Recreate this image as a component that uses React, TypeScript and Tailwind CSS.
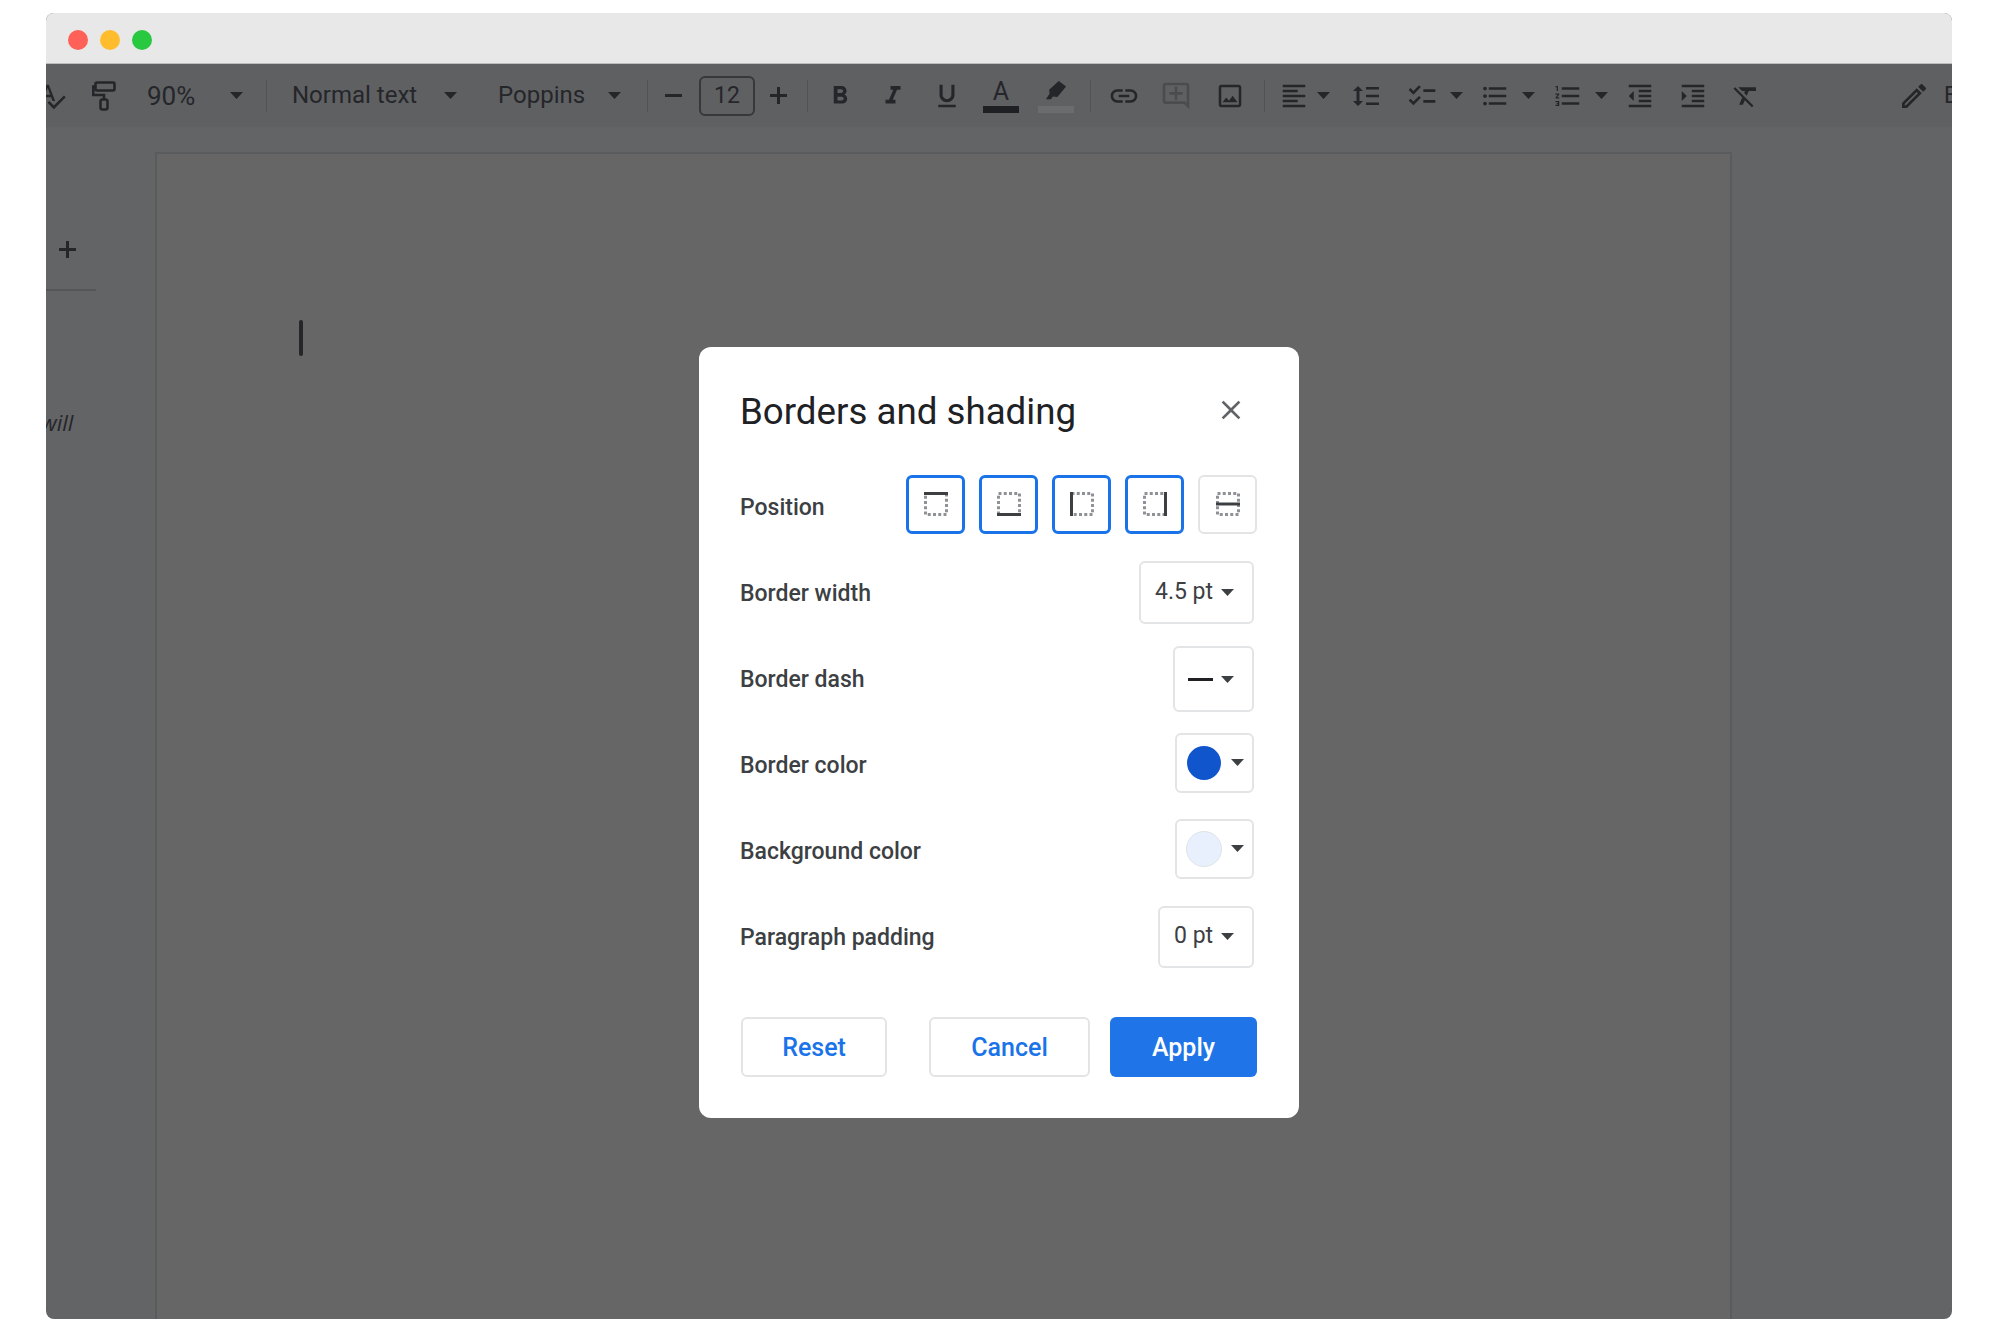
import {
  MdSpellcheck,
  MdFormatBold,
  MdFormatItalic,
  MdFormatUnderlined,
  MdLink,
  MdOutlineAddComment,
  MdOutlineImage,
  MdFormatAlignLeft,
  MdChecklist,
  MdFormatListBulleted,
  MdFormatListNumbered,
  MdFormatIndentDecrease,
  MdFormatIndentIncrease,
  MdFormatClear,
  MdOutlineEdit,
  MdClose,
} from 'react-icons/md'

const Caret = ({ className = '' }: { className?: string }) => (
  <svg viewBox="0 0 13 7" className={`w-[13px] h-[7px] shrink-0 fill-current ${className}`}>
    <path d="M0 0h13L6.5 7z" />
  </svg>
)

const Sep = ({ className = '' }: { className?: string }) => (
  <div className={`w-px h-8 bg-[#525356] shrink-0 ${className}`} />
)

// top / bottom / left / right / middle border glyphs of the Position row
function BorderGlyph({ side }: { side: 'top' | 'bottom' | 'left' | 'right' | 'middle' }) {
  return (
    <svg viewBox="0 0 24 24" className="w-6 h-6" fill="none">
      <rect x="1.5" y="1.5" width="21" height="21" stroke="#8e9196" strokeWidth="3" strokeDasharray="3 2.25" />
      {side === 'top' && <path d="M0 1.5h24" stroke="#3c4043" strokeWidth="3" />}
      {side === 'bottom' && <path d="M0 22.5h24" stroke="#3c4043" strokeWidth="3" />}
      {side === 'left' && <path d="M1.5 0v24" stroke="#3c4043" strokeWidth="3" />}
      {side === 'right' && <path d="M22.5 0v24" stroke="#3c4043" strokeWidth="3" />}
      {side === 'middle' && <path d="M0 12h24" stroke="#3c4043" strokeWidth="3" />}
    </svg>
  )
}

const positions = ['top', 'bottom', 'left', 'right'] as const

const rowCls = 'h-[86px] flex items-center justify-between'
const labelCls = 'text-[23px] font-medium text-[#3c4043] leading-none -ml-px'
const selectCls = 'flex items-center border-2 border-[#e3e4e6] rounded-md shrink-0'

export default function App() {
  return (
    <div className="w-full h-[1332px] bg-white pl-[46px] pt-[13px] font-['Roboto',sans-serif]">
      <div className="relative w-[1906px] h-[1306px] rounded-lg overflow-hidden flex flex-col bg-[#636466]">
        {/* Title bar */}
        <div className="h-[51px] shrink-0 bg-[#e8e8e8] border-b border-[#bdbdbd] flex items-center gap-3 pl-[22px] pt-[3px]">
          <div className="w-5 h-5 rounded-full bg-[#ff6058]" />
          <div className="w-5 h-5 rounded-full bg-[#ffbd2e]" />
          <div className="w-5 h-5 rounded-full bg-[#28c840]" />
        </div>

        {/* Docs toolbar */}
        <div className="h-[63px] shrink-0 bg-[#5f6062] flex items-center text-[#25262a] whitespace-nowrap">
          <MdSpellcheck size={30} className="shrink-0 -ml-[9px]" />
          <svg viewBox="0 0 24 30" className="w-6 h-[30px] shrink-0 ml-[25px]" fill="none" stroke="currentColor" strokeWidth="2.6">
            <rect x="3.5" y="1.5" width="19" height="8" rx="1.5" />
            <path d="M3.5 5.5H1.3v8.5H12v4.5" />
            <rect x="8.5" y="18.5" width="7" height="10" rx="2" />
          </svg>
          <span className="w-12 ml-[31px] text-[26px] leading-none shrink-0 pt-px">90%</span>
          <Caret className="ml-[35px]" />
          <Sep className="ml-[23px]" />
          <span className="w-[125px] ml-[25px] text-[24px] leading-none shrink-0 -mt-px">Normal text</span>
          <Caret className="ml-[27px]" />
          <span className="w-[84px] ml-[41px] text-[24px] leading-none shrink-0 -mt-px">Poppins</span>
          <Caret className="ml-[26px]" />
          <Sep className="ml-[26px]" />
          <div className="w-[17px] h-[3px] ml-[17px] bg-[#25262a] shrink-0" />
          <div className="w-14 h-10 ml-[17px] pt-[2px] border-2 border-[#37383b] rounded-md flex items-center justify-center text-[23px] shrink-0">12</div>
          <svg viewBox="0 0 17 17" className="w-[17px] h-[17px] ml-[15px] shrink-0 fill-current">
            <path d="M7 0h3v7h7v3h-7v7H7v-7H0V7h7z" />
          </svg>
          <Sep className="ml-5" />
          <MdFormatBold size={30} className="shrink-0 ml-[17px]" />
          <MdFormatItalic size={30} className="shrink-0 ml-[23px]" />
          <MdFormatUnderlined size={30} className="shrink-0 ml-6" />
          <div className="w-9 ml-[21px] flex flex-col items-center shrink-0 h-[33px] mt-[2px]">
            <span className="text-[25px] leading-[24px] h-[26px]">A</span>
            <div className="w-full h-[7px] bg-[#1f2023]" />
          </div>
          <div className="w-9 ml-[19px] flex flex-col items-center shrink-0 h-[33px] mt-[2px]">
            <svg viewBox="0 0 24 24" className="w-6 h-[22px] fill-current mb-1">
              <path d="M15 1l8 6-9.5 11.5-5-.5-2 3H1l4-6-.5-4.5z" />
            </svg>
            <div className="w-full h-[7px] bg-[#6b6c6e]" />
          </div>
          <Sep className="ml-4" />
          <MdLink size={32} className="shrink-0 ml-[17px]" />
          <MdOutlineAddComment size={32} className="shrink-0 ml-5 text-[#4b4c4f]" />
          <MdOutlineImage size={30} className="shrink-0 ml-[23px]" />
          <Sep className="ml-[19px]" />
          <MdFormatAlignLeft size={30} className="shrink-0 ml-[14px]" />
          <Caret className="ml-2" />
          <svg viewBox="0 0 26 20" className="w-[26px] h-5 shrink-0 ml-[23px] fill-current">
            <path d="M5 0l5 5H6.5v10H10l-5 5-5-5h3.5V5H0z" />
            <path d="M13 1h13v2.6H13zM13 8.7h13v2.6H13zM13 16.4h13V19H13z" />
          </svg>
          <MdChecklist size={32} className="shrink-0 ml-[27px]" />
          <Caret className="ml-3" />
          <MdFormatListBulleted size={30} className="shrink-0 ml-[17px]" />
          <Caret className="ml-3" />
          <MdFormatListNumbered size={30} className="shrink-0 ml-[18px]" />
          <Caret className="ml-3" />
          <MdFormatIndentDecrease size={30} className="shrink-0 ml-[17px]" />
          <MdFormatIndentIncrease size={30} className="shrink-0 ml-[23px]" />
          <MdFormatClear size={30} className="shrink-0 ml-[23px]" />
          <MdOutlineEdit size={32} className="shrink-0 ml-[137px]" />
          <span className="ml-[14px] text-[23px] leading-none shrink-0">E</span>
        </div>

        {/* Document area */}
        <div className="flex-1 flex min-h-0">
          <div className="w-[109px] shrink-0 flex flex-col text-[#25262a]">
            <svg viewBox="0 0 17 17" className="w-[17px] h-[17px] mt-[114px] ml-[13px] fill-current">
              <path d="M7 0h3v7h7v3h-7v7H7v-7H0V7h7z" />
            </svg>
            <div className="w-[50px] h-[2px] mt-[31px] bg-[#55565a]" />
            <span className="mt-[120px] -ml-[5px] italic text-[22px] leading-none font-['Open_Sans',sans-serif]">will</span>
          </div>
          <div className="w-[1577px] mt-[25px] bg-[#666666] border-l-2 border-t-2 border-r-2 border-[#5a5b5d] shrink-0">
            <div className="w-1 h-9 mt-[166px] ml-[142px] rounded-sm bg-[#25262a]" />
          </div>
        </div>

        {/* Borders and shading dialog */}
        <div className="absolute left-[653px] top-[334px] w-[600px] h-[771px] bg-white rounded-xl pl-[42px] pr-[42px] pt-[38px] flex flex-col">
          <div className="h-14 flex items-center justify-between shrink-0">
            <h2 className="text-[36.7px] leading-none text-[#202124] -ml-px mb-[2px]">Borders and shading</h2>
            <MdClose size={32} className="text-[#5f6368] mr-[10px] mb-[6px]" />
          </div>

          <div className="mt-[34px] h-[58px] flex items-center justify-between">
            <span className={`${labelCls} pt-[6px]`}>Position</span>
            <div className="flex gap-[14px]">
              {positions.map((p) => (
                <div key={p} className="w-[59px] h-[59px] border-[3px] border-[#1a73e8] rounded-md flex items-center justify-center">
                  <BorderGlyph side={p} />
                </div>
              ))}
              <div className="w-[59px] h-[59px] border-2 border-[#e3e4e6] rounded-md flex items-center justify-center">
                <BorderGlyph side="middle" />
              </div>
            </div>
          </div>

          <div className="mt-[17px] flex flex-col">
            <div className={rowCls}>
              <span className={labelCls}>Border width</span>
              <div className={`${selectCls} w-[115px] h-[63px] mr-[3px] mb-[2px] pl-[14px] text-[23px] text-[#3c4043]`}>
                <span className="w-[66px]">4.5 pt</span>
                <Caret className="text-[#3c4043] w-3 h-[6px]" />
              </div>
            </div>
            <div className={rowCls}>
              <span className={labelCls}>Border dash</span>
              <div className={`${selectCls} w-[81px] h-[66px] mr-[3px] pl-[13px]`}>
                <div className="w-[25px] h-[3px] bg-[#202124]" />
                <Caret className="text-[#3c4043] ml-2 w-3 h-[6px]" />
              </div>
            </div>
            <div className={rowCls}>
              <span className={labelCls}>Border color</span>
              <div className={`${selectCls} w-[79px] h-[60px] mr-[3px] mb-[5px] pl-[10px]`}>
                <div className="w-[34px] h-[34px] rounded-full bg-[#1155cc]" />
                <Caret className="text-[#3c4043] ml-[10px] w-3 h-[6px]" />
              </div>
            </div>
            <div className={rowCls}>
              <span className={labelCls}>Background color</span>
              <div className={`${selectCls} w-[79px] h-[60px] mr-[3px] mb-[5px] pl-[9px]`}>
                <div className="w-9 h-9 rounded-full bg-[#e8f0fe] border border-[#dfe3e8]" />
                <Caret className="text-[#3c4043] ml-[9px] w-3 h-[6px]" />
              </div>
            </div>
            <div className={rowCls}>
              <span className={labelCls}>Paragraph padding</span>
              <div className={`${selectCls} w-[96px] h-[62px] mr-[3px] mb-[1px] pl-[14px] text-[23px] text-[#3c4043]`}>
                <span className="w-[47px]">0 pt</span>
                <Caret className="text-[#3c4043] w-3 h-[6px]" />
              </div>
            </div>
          </div>

          <div className="mt-[37px] flex text-[25px] font-medium">
            <button className="w-[146px] h-[60px] pt-px border-2 border-[#e3e4e6] rounded-md text-[#1a73e8]">Reset</button>
            <button className="w-[161px] h-[60px] pt-px ml-auto border-2 border-[#e3e4e6] rounded-md text-[#1a73e8]">Cancel</button>
            <button className="w-[147px] h-[60px] pt-px ml-5 rounded-md bg-[#1f75e8] text-white">Apply</button>
          </div>
        </div>
      </div>
    </div>
  )
}
